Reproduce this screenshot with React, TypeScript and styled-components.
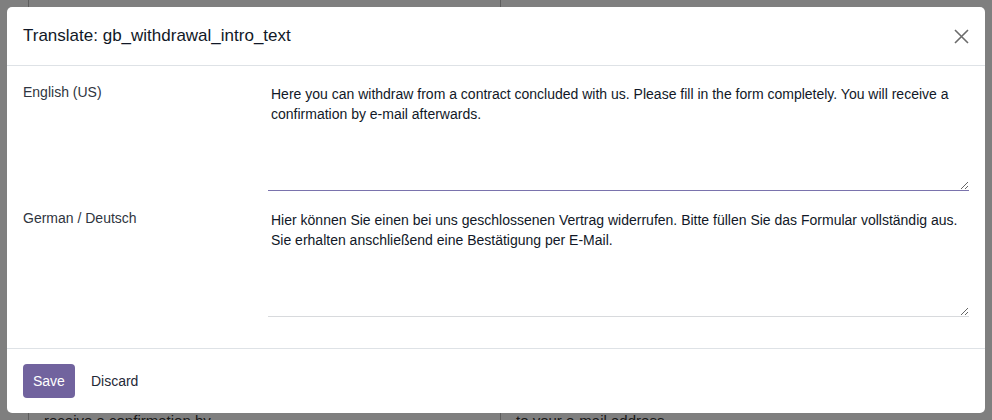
import React from 'react';
import styled, { createGlobalStyle } from 'styled-components';

const GlobalStyle = createGlobalStyle`
  html, body {
    margin: 0;
    padding: 0;
    height: 100%;
    overflow: hidden;
  }
  body {
    font-family: 'Liberation Sans', Arial, sans-serif;
    font-size: 14px;
    color: #212529;
  }
`;

const Page = styled.div`
  position: relative;
  width: 992px;
  height: 420px;
  background: #fff;
  overflow: hidden;
`;

const Sheet = styled.div`
  display: grid;
  grid-template-columns: 472px 472px;
  margin-left: 28px;
  height: 100%;
`;

const SheetCell = styled.div`
  border-left: 1px solid #bdbdbd;
  padding: 411px 0 0 15px;
  font-size: 15px;
  line-height: 20px;
  color: #333;
`;

const Backdrop = styled.div`
  position: absolute;
  inset: 0;
  background: rgba(0, 0, 0, 0.5);
  padding: 7px;
  box-sizing: border-box;
  display: flex;
`;

const Dialog = styled.div`
  flex: 1;
  background: #fff;
  border-radius: 5px;
  display: flex;
  flex-direction: column;
  overflow: hidden;
`;

const Header = styled.div`
  display: flex;
  align-items: center;
  justify-content: space-between;
  height: 58px;
  padding: 0 16px;
  border-bottom: 1px solid #dee2e6;
`;

const Title = styled.h4`
  margin: 0;
  font-size: 17px;
  font-weight: 400;
  color: #111827;
`;

const CloseButton = styled.button`
  border: none;
  background: transparent;
  padding: 0;
  width: 16px;
  height: 16px;
  display: flex;
  align-items: center;
  justify-content: center;
  cursor: pointer;
`;

const Body = styled.div`
  flex: 1;
  padding: 15px 16px 0;
`;

const Row = styled.div`
  display: grid;
  grid-template-columns: 245px 1fr;
  margin-bottom: 16px;
`;

const Label = styled.div`
  font-size: 14px;
  line-height: 20px;
  color: #2f3540;
  padding-top: 1px;
`;

const TextArea = styled.textarea<{ focused?: boolean }>`
  display: block;
  width: 100%;
  height: 110px;
  box-sizing: border-box;
  border: none;
  border-bottom: 1px solid ${({ focused }) => (focused ? '#7a73ad' : '#d8dadd')};
  padding: 3px 3px 2px;
  font-family: 'Liberation Sans', Arial, sans-serif;
  font-size: 14px;
  line-height: 20px;
  color: #111827;
  resize: vertical;
  outline: none;
  background: #fff;
`;

const Footer = styled.div`
  display: flex;
  align-items: center;
  gap: 6px;
  height: 64px;
  padding: 0 16px;
  border-top: 1px solid #dee2e6;
`;

const Button = styled.button<{ primary?: boolean }>`
  height: 34px;
  padding: 0 10px;
  border: none;
  border-radius: 4px;
  font-family: 'Liberation Sans', Arial, sans-serif;
  font-size: 14px;
  background: ${({ primary }) => (primary ? '#71639e' : 'transparent')};
  color: ${({ primary }) => (primary ? '#fff' : '#1f2937')};
  cursor: pointer;
`;

const rows = [
  {
    lang: 'English (US)',
    text: 'Here you can withdraw from a contract concluded with us. Please fill in the form completely. You will receive a confirmation by e-mail afterwards.',
    focused: true,
  },
  {
    lang: 'German / Deutsch',
    text: 'Hier können Sie einen bei uns geschlossenen Vertrag widerrufen. Bitte füllen Sie das Formular vollständig aus. Sie erhalten anschließend eine Bestätigung per E-Mail.',
    focused: false,
  },
];

const App: React.FC = () => {
  return (
    <Page>
      <GlobalStyle />
      <Sheet>
        <SheetCell>receive a confirmation by</SheetCell>
        <SheetCell>to your e-mail address</SheetCell>
      </Sheet>
      <Backdrop>
        <Dialog>
          <Header>
            <Title>Translate: gb_withdrawal_intro_text</Title>
            <CloseButton aria-label="Close">
              <svg width="15" height="15" viewBox="0 0 15 15">
                <path d="M1 1 L14 14 M14 1 L1 14" stroke="#6b6b6b" strokeWidth="1.6" fill="none" />
              </svg>
            </CloseButton>
          </Header>
          <Body>
            {rows.map(r => (
              <Row key={r.lang}>
                <Label>{r.lang}</Label>
                <TextArea focused={r.focused} defaultValue={r.text} />
              </Row>
            ))}
          </Body>
          <Footer>
            <Button primary>Save</Button>
            <Button>Discard</Button>
          </Footer>
        </Dialog>
      </Backdrop>
    </Page>
  );
};

export default App;
